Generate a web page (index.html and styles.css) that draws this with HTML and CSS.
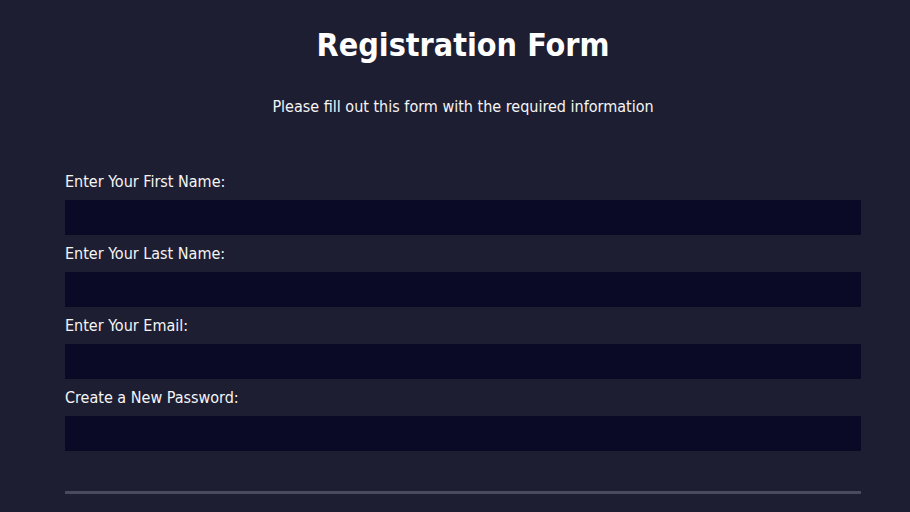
FILE: index.html
```html
<!DOCTYPE html>
<html>
<head>
<meta charset="utf-8">
<link rel="stylesheet" href="styles.css">
</head>
<body>
<div class="page">
  <h1 class="title">Registration Form</h1>
  <p class="subtitle">Please fill out this form with the required information</p>
  <form class="form">
    <div class="field">
      <label class="label" for="fn">Enter Your First Name:</label>
      <input class="input" id="fn" type="text">
    </div>
    <div class="field">
      <label class="label" for="ln">Enter Your Last Name:</label>
      <input class="input" id="ln" type="text">
    </div>
    <div class="field">
      <label class="label" for="em">Enter Your Email:</label>
      <input class="input" id="em" type="email">
    </div>
    <div class="field">
      <label class="label" for="pw">Create a New Password:</label>
      <input class="input" id="pw" type="password">
    </div>
    <hr class="divider">
  </form>
</div>
</body>
</html>
```
FILE: styles.css
```css
html, body {
  margin: 0;
  padding: 0;
  background: #1e1e33;
  color: #f5f5f5;
  font-family: "DejaVu Sans Condensed", "DejaVu Sans", sans-serif;
  height: 100%;
  overflow: hidden;
}
.page {
  width: 796px;
  margin-left: 65px;
  padding-top: 27px;
}
.title {
  margin: 0;
  text-align: center;
  font-size: 32px;
  line-height: 36px;
  font-weight: bold;
  color: #ffffff;
}
.subtitle {
  margin: 34px 0 0;
  text-align: center;
  font-size: 16px;
  line-height: 20px;
}
.form {
  margin-top: 55px;
  display: flex;
  flex-direction: column;
}
.field {
  display: flex;
  flex-direction: column;
}
.label {
  font-size: 16px;
  line-height: 20px;
  padding-bottom: 8px;
}
.field + .field .label {
  padding-top: 9px;
}
.input {
  display: block;
  box-sizing: border-box;
  width: 100%;
  height: 35px;
  margin: 0;
  border: none;
  background: #0a0a26;
  outline: none;
}
.divider {
  margin: 40px 0 0;
  border: none;
  height: 3px;
  background: #4a4a5e;
}
```
